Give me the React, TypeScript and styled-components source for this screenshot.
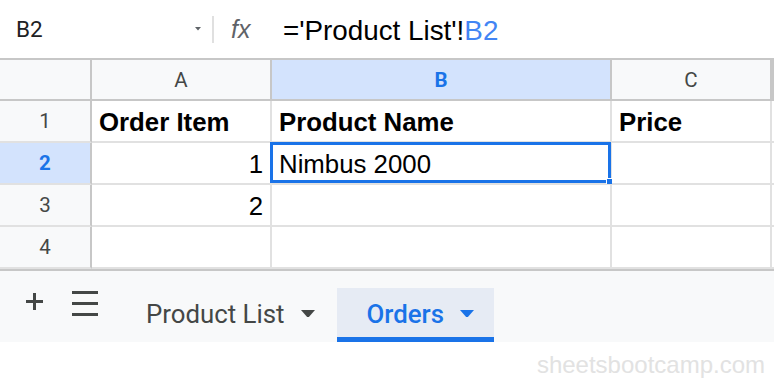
import styled, { createGlobalStyle } from "styled-components";

const GlobalStyle = createGlobalStyle`
  body {
    margin: 0;
    background: #ffffff;
    font-family: "Liberation Sans", Arial, sans-serif;
  }
`;

const columns = ["A", "B", "C", ""];
const selectedCol = "B";
const selectedRow = 2;

type RowData = { order: string; product: string; price: string; bold?: boolean };

const rows: RowData[] = [
  { order: "Order Item", product: "Product Name", price: "Price", bold: true },
  { order: "1", product: "Nimbus 2000", price: "" },
  { order: "2", product: "", price: "" },
  { order: "", product: "", price: "" },
];

const Caret = ({ size = 14, color = "#444746" }: { size?: number; color?: string }) => (
  <svg width={size} height={size * 0.57} viewBox="0 0 14 8">
    <path d="M0 0h14L7 8z" fill={color} />
  </svg>
);

const App = () => {
  return (
    <Page>
      <GlobalStyle />
      <FormulaBar>
        <NameBox>
          B2
          <NameCaret>
            <Caret size={6} color="#5f6368" />
          </NameCaret>
        </NameBox>
        <Divider />
        <Fx>fx</Fx>
        <Formula>
          ='Product List'!<Ref>B2</Ref>
        </Formula>
      </FormulaBar>

      <Grid>
        <Corner />
        {columns.map((c, i) => (
          <ColHeader key={i} $active={c === selectedCol}>
            {c}
          </ColHeader>
        ))}
        {rows.map((r, i) => {
          const n = i + 1;
          return [
            <RowHeader key={`h${n}`} $active={n === selectedRow}>
              {n}
            </RowHeader>,
            <Cell key={`a${n}`} $bold={r.bold} $numeric={!r.bold}>
              {r.order}
            </Cell>,
            <Cell key={`b${n}`} $bold={r.bold} $selected={n === selectedRow}>
              {r.product}
            </Cell>,
            <Cell key={`c${n}`} $bold={r.bold}>
              {r.price}
            </Cell>,
            <Cell key={`d${n}`} />,
          ];
        })}
      </Grid>

      <SheetBar>
        <Tools>
          <AddIcon width="17" height="17" viewBox="0 0 17 17">
            <rect x="7" y="0" width="3" height="17" fill="#444746" />
            <rect x="0" y="7" width="17" height="3" fill="#444746" />
          </AddIcon>
          <MenuIcon width="26" height="25" viewBox="0 0 26 25">
            <rect x="0" y="0" width="26" height="3" fill="#444746" />
            <rect x="0" y="11" width="26" height="3" fill="#444746" />
            <rect x="0" y="22" width="26" height="3" fill="#444746" />
          </MenuIcon>
        </Tools>
        <Tab>
          Product List
          <Caret />
        </Tab>
        <Tab $active>
          Orders
          <Caret color="#1a73e8" />
        </Tab>
      </SheetBar>

      <Watermark>sheetsbootcamp.com</Watermark>
    </Page>
  );
};

const Page = styled.div`
  width: 774px;
  height: 378px;
  overflow: hidden;
  background: #ffffff;
`;

const FormulaBar = styled.div`
  display: flex;
  align-items: center;
  height: 58px;
`;

const NameBox = styled.div`
  display: flex;
  align-items: center;
  box-sizing: border-box;
  width: 212px;
  padding-left: 16px;
  font-family: Roboto, "Liberation Sans", sans-serif;
  font-size: 22.5px;
  color: #202124;
`;

const NameCaret = styled.span`
  display: flex;
  margin-left: auto;
  margin-right: 11px;
`;

const Divider = styled.div`
  width: 2px;
  height: 27px;
  background: #e0e0e0;
`;

const Fx = styled.span`
  margin-left: 17px;
  width: 52px;
  font-style: italic;
  font-size: 25px;
  color: #5f6368;
`;

const Formula = styled.span`
  font-size: 27.8px;
  color: #000000;
  padding-top: 3px;
`;

const Ref = styled.span`
  color: #4285f4;
`;

const Grid = styled.div`
  display: grid;
  grid-template-columns: 92px 180px 340px 160px 2px;
  grid-template-rows: 41px repeat(4, 42px);
  border-top: 2px solid #c7c7c7;
`;

const HeaderBase = styled.div<{ $active?: boolean }>`
  display: flex;
  align-items: center;
  justify-content: center;
  background: ${({ $active }) => ($active ? "#d3e3fd" : "#f8f9fa")};
  color: ${({ $active }) => ($active ? "#1a73e8" : "#444746")};
  font-family: Roboto, "Liberation Sans", sans-serif;
  font-weight: ${({ $active }) => ($active ? 700 : 400)};
  font-size: 20.5px;
`;

const Corner = styled(HeaderBase)`
  border-right: 2px solid #c7c7c7;
  border-bottom: 2px solid #c7c7c7;
`;

const ColHeader = styled(HeaderBase)`
  border-right: 2px solid #c7c7c7;
  border-bottom: 2px solid #c7c7c7;
`;

const RowHeader = styled(HeaderBase)`
  border-right: 2px solid #c7c7c7;
  border-bottom: 2px solid #e1e1e1;
`;

const Cell = styled.div<{ $bold?: boolean; $numeric?: boolean; $selected?: boolean }>`
  position: relative;
  display: flex;
  align-items: flex-end;
  justify-content: ${({ $numeric }) => ($numeric ? "flex-end" : "flex-start")};
  padding: 0 7px 5px;
  border-right: 2px solid #e1e1e1;
  border-bottom: 2px solid #e1e1e1;
  font-size: 25.8px;
  line-height: 28px;
  font-weight: ${({ $bold }) => ($bold ? 700 : 400)};
  color: #000000;
  white-space: nowrap;
  overflow: visible;

  ${({ $selected }) =>
    $selected &&
    `
    &::after {
      content: "";
      position: absolute;
      top: -1px;
      left: -2px;
      right: -1px;
      bottom: 0;
      border: 3px solid #1a73e8;
    }
    &::before {
      content: "";
      position: absolute;
      right: -2px;
      bottom: -1px;
      width: 5px;
      height: 5px;
      background: #1a73e8;
      border-left: 1px solid #ffffff;
      border-top: 1px solid #ffffff;
      z-index: 1;
    }
  `}
`;

const SheetBar = styled.div`
  display: flex;
  align-items: flex-end;
  height: 71px;
  padding-left: 26px;
  background: #f8f9fa;
  border-top: 2px solid #c7c7c7;
`;

const Tools = styled.div`
  display: flex;
  align-self: flex-start;
  gap: 29px;
  margin-right: 18px;
`;

const AddIcon = styled.svg`
  margin-top: 22px;
`;

const MenuIcon = styled.svg`
  margin-top: 20px;
`;

const Tab = styled.div<{ $active?: boolean }>`
  display: flex;
  align-items: center;
  gap: 16px;
  box-sizing: border-box;
  height: 54px;
  padding: 2px 20px 0 30px;
  margin-right: 2px;
  background: ${({ $active }) => ($active ? "#e6ebf4" : "transparent")};
  border-bottom: 5px solid ${({ $active }) => ($active ? "#1a73e8" : "transparent")};
  font-family: Roboto, "Liberation Sans", sans-serif;
  font-size: 25.8px;
  font-weight: ${({ $active }) => ($active ? 500 : 400)};
  color: ${({ $active }) => ($active ? "#1a73e8" : "#444746")};
`;

const Watermark = styled.div`
  padding: 11px 9px 0 0;
  text-align: right;
  font-size: 24px;
  line-height: 24px;
  color: #e2e2e2;
`;

export default App;
